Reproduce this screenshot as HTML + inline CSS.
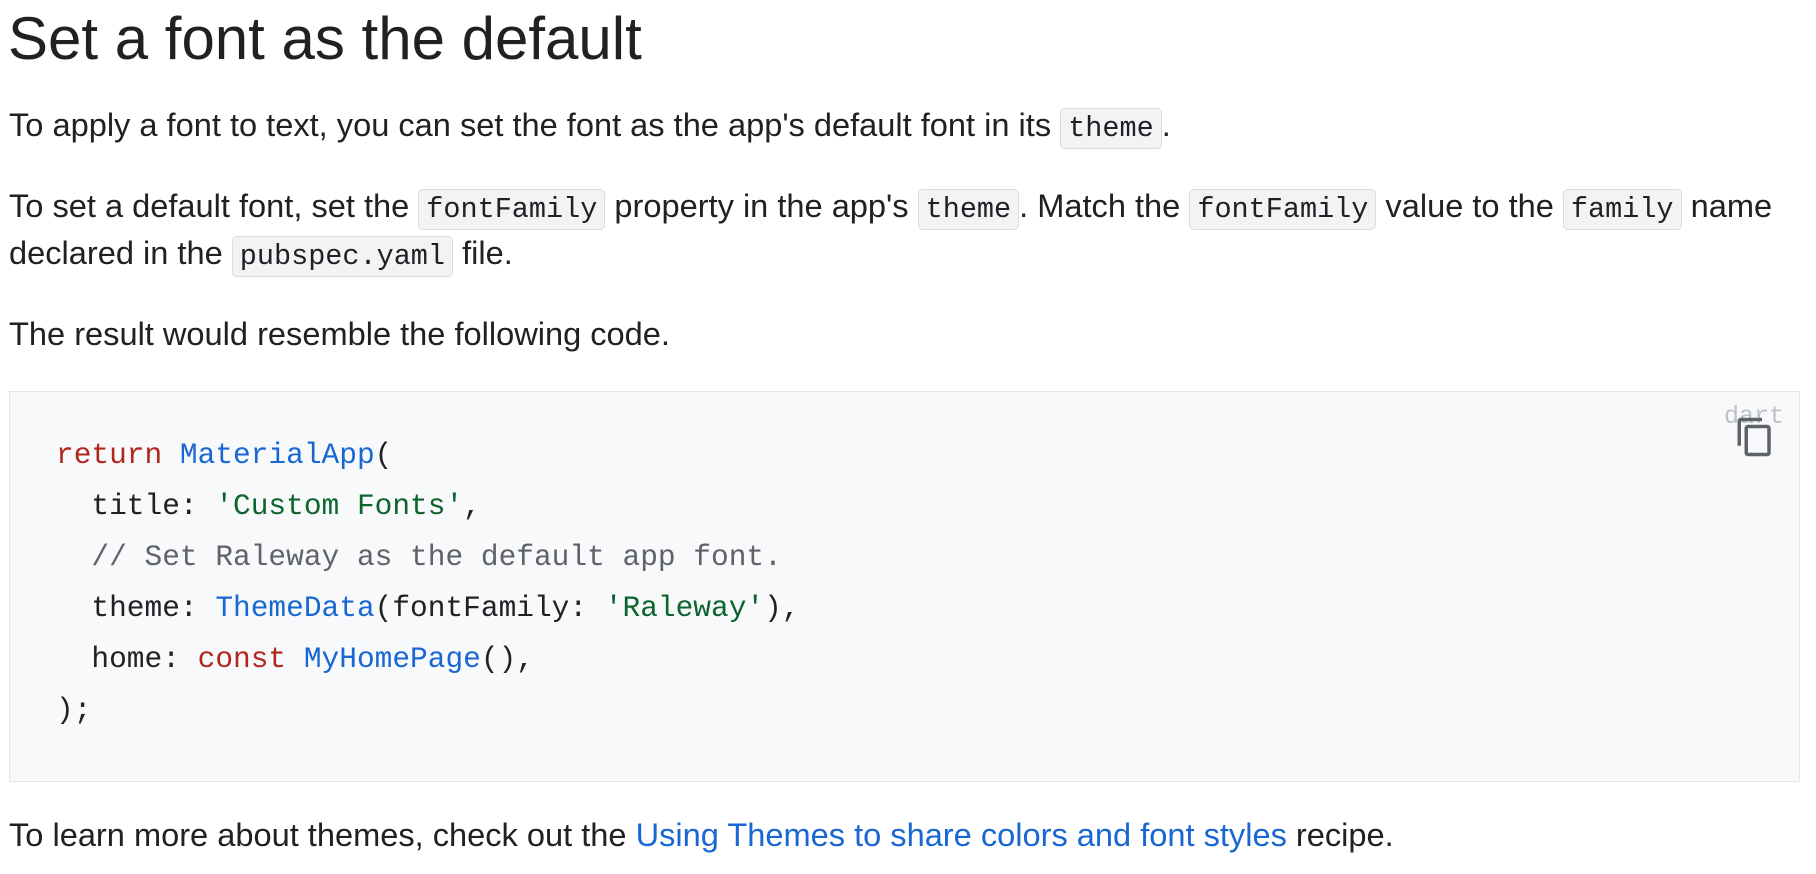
<!DOCTYPE html>
<html><head><meta charset="utf-8"><style>
html,body{margin:0;padding:0;background:#fff;width:1816px;height:874px;overflow:hidden}
body{font-family:"Liberation Sans",Arial,sans-serif;color:#202124}
.a{position:absolute;white-space:pre}
h1{position:absolute;left:8px;top:2px;margin:0;font-weight:400;font-size:60px;line-height:74px;color:#202124}
.p{font-size:32.6px;line-height:47px;left:9px}
code{font-family:"Liberation Mono",monospace;font-size:28.5px;background:#f1f3f4;border:1px solid #dadce0;border-radius:5px;padding:3px 7px;color:#202124}
.box{position:absolute;left:9px;top:391px;width:1791px;height:391px;background:#f8f9fa;border:1px solid #e3e5e8;box-sizing:border-box}
.c{font-family:"Liberation Mono",monospace;font-size:29.5px;line-height:51px;color:#202124}
.k{color:#b3261e}.t{color:#1967d2}.s{color:#0d652d}.cm{color:#5f6368}
a{color:#1967d2;text-decoration:none}
</style></head><body>
<h1>Set a font as the default</h1>
<div class="a p" style="top:101px">To apply a font to text, you can set the font as the app's default font in its <code>theme</code>.</div>
<div class="a p" style="top:182px">To set a default font, set the <code>fontFamily</code> property in the app's <code>theme</code>. Match the <code>fontFamily</code> value to the <code>family</code> name</div>
<div class="a p" style="top:229px">declared in the <code>pubspec.yaml</code> file.</div>
<div class="a p" style="top:310px">The result would resemble the following code.</div>
<div class="box"></div>
<div class="a" style="left:1724px;top:402px;font-family:'Liberation Mono',monospace;font-size:25px;color:#bdc1c6">dart</div>
<svg class="a" style="left:1734px;top:416px" width="42" height="42" viewBox="0 0 24 24"><path fill="#5f6368" d="M16 1H4c-1.1 0-2 .9-2 2v14h2V3h12V1zm3 4H8c-1.1 0-2 .9-2 2v14c0 1.1.9 2 2 2h11c1.1 0 2-.9 2-2V7c0-1.1-.9-2-2-2zm0 16H8V7h11v14z"/></svg>
<div class="a c" style="left:56px;top:430px"><span class="k">return</span> <span class="t">MaterialApp</span>(</div>
<div class="a c" style="left:56px;top:481px">  title: <span class="s">'Custom Fonts'</span>,</div>
<div class="a c" style="left:56px;top:532px"><span class="cm">  // Set Raleway as the default app font.</span></div>
<div class="a c" style="left:56px;top:583px">  theme: <span class="t">ThemeData</span>(fontFamily: <span class="s">'Raleway'</span>),</div>
<div class="a c" style="left:56px;top:634px">  home: <span class="k">const</span> <span class="t">MyHomePage</span>(),</div>
<div class="a c" style="left:56px;top:685px">);</div>
<div class="a p" style="top:811px">To learn more about themes, check out the <a>Using Themes to share colors and font styles</a> recipe.</div>
</body></html>
